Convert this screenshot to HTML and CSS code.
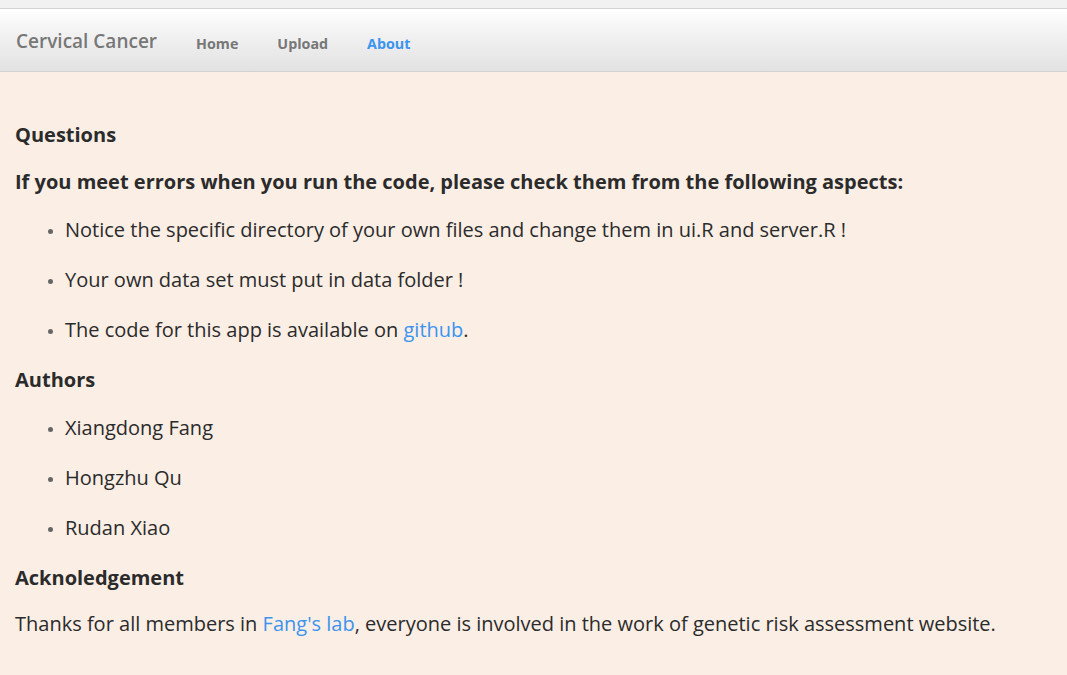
FILE: index.html
```html
<!DOCTYPE html>
<html>
<head>
<meta charset="utf-8">
<link rel="stylesheet" href="styles.css">
</head>
<body>
<div class="topstrip"></div>
<nav class="navbar">
  <span class="brand">Cervical Cancer</span>
  <a class="nav-link">Home</a>
  <a class="nav-link">Upload</a>
  <a class="nav-link active">About</a>
</nav>
<main class="content">
  <h4 class="h">Questions</h4>
  <h4 class="h sub">If you meet errors when you run the code, please check them from the following aspects:</h4>
  <ul class="list">
    <li>Notice the specific directory of your own files and change them in ui.R and server.R !</li>
    <li>Your own data set must put in data folder !</li>
    <li>The code for this app is available on <a class="link">github</a>.</li>
  </ul>
  <h4 class="h">Authors</h4>
  <ul class="list">
    <li>Xiangdong Fang</li>
    <li>Hongzhu Qu</li>
    <li>Rudan Xiao</li>
  </ul>
  <h4 class="h">Acknoledgement</h4>
  <p class="para">Thanks for all members in <a class="link">Fang's lab</a>, everyone is involved in the work of genetic risk assessment website.</p>
</main>
</body>
</html>
```
FILE: styles.css
```css
html, body {
  margin: 0;
  padding: 0;
}
body {
  background: #faeee5;
  font-family: "Open Sans", "Liberation Sans", sans-serif;
  color: #2b2b2b;
  height: 675px;
  overflow: hidden;
}
.topstrip {
  height: 8px;
  background: #f1f1f1;
  border-bottom: 1px solid #d3d3d3;
}
.navbar {
  height: 63px;
  box-sizing: border-box;
  display: flex;
  align-items: center;
  background: linear-gradient(to bottom, #ffffff 0%, #f2f2f2 40%, #e2e2e2 100%);
  border-bottom: 1px solid #d2d2d2;
  padding-left: 16px;
}
.brand {
  font-size: 19px;
  font-weight: 600;
  color: #777;
  margin-right: 39px;
  margin-top: 1px;
}
.nav-link {
  font-size: 14.3px;
  font-weight: 700;
  color: #777;
  margin-right: 39px;
  margin-top: 6px;
}
.nav-link.active {
  color: #3c94ef;
}
.content {
  padding: 49px 15px 0 15px;
}
.h {
  font-size: 20px;
  font-weight: 700;
  margin: 0;
  line-height: 28px;
}
.sub {
  margin-top: 19px;
}
.list {
  margin: 20px 0 0 0;
  padding-left: 50px;
  font-size: 20px;
}
.list li {
  line-height: 28px;
  margin-bottom: 22px;
}
.list li::marker {
  color: #666;
  font-size: 14px;
}
.para {
  font-size: 20px;
  line-height: 28px;
  margin: 18px 0 0 0;
}
.link {
  color: #3c94ef;
}
```
